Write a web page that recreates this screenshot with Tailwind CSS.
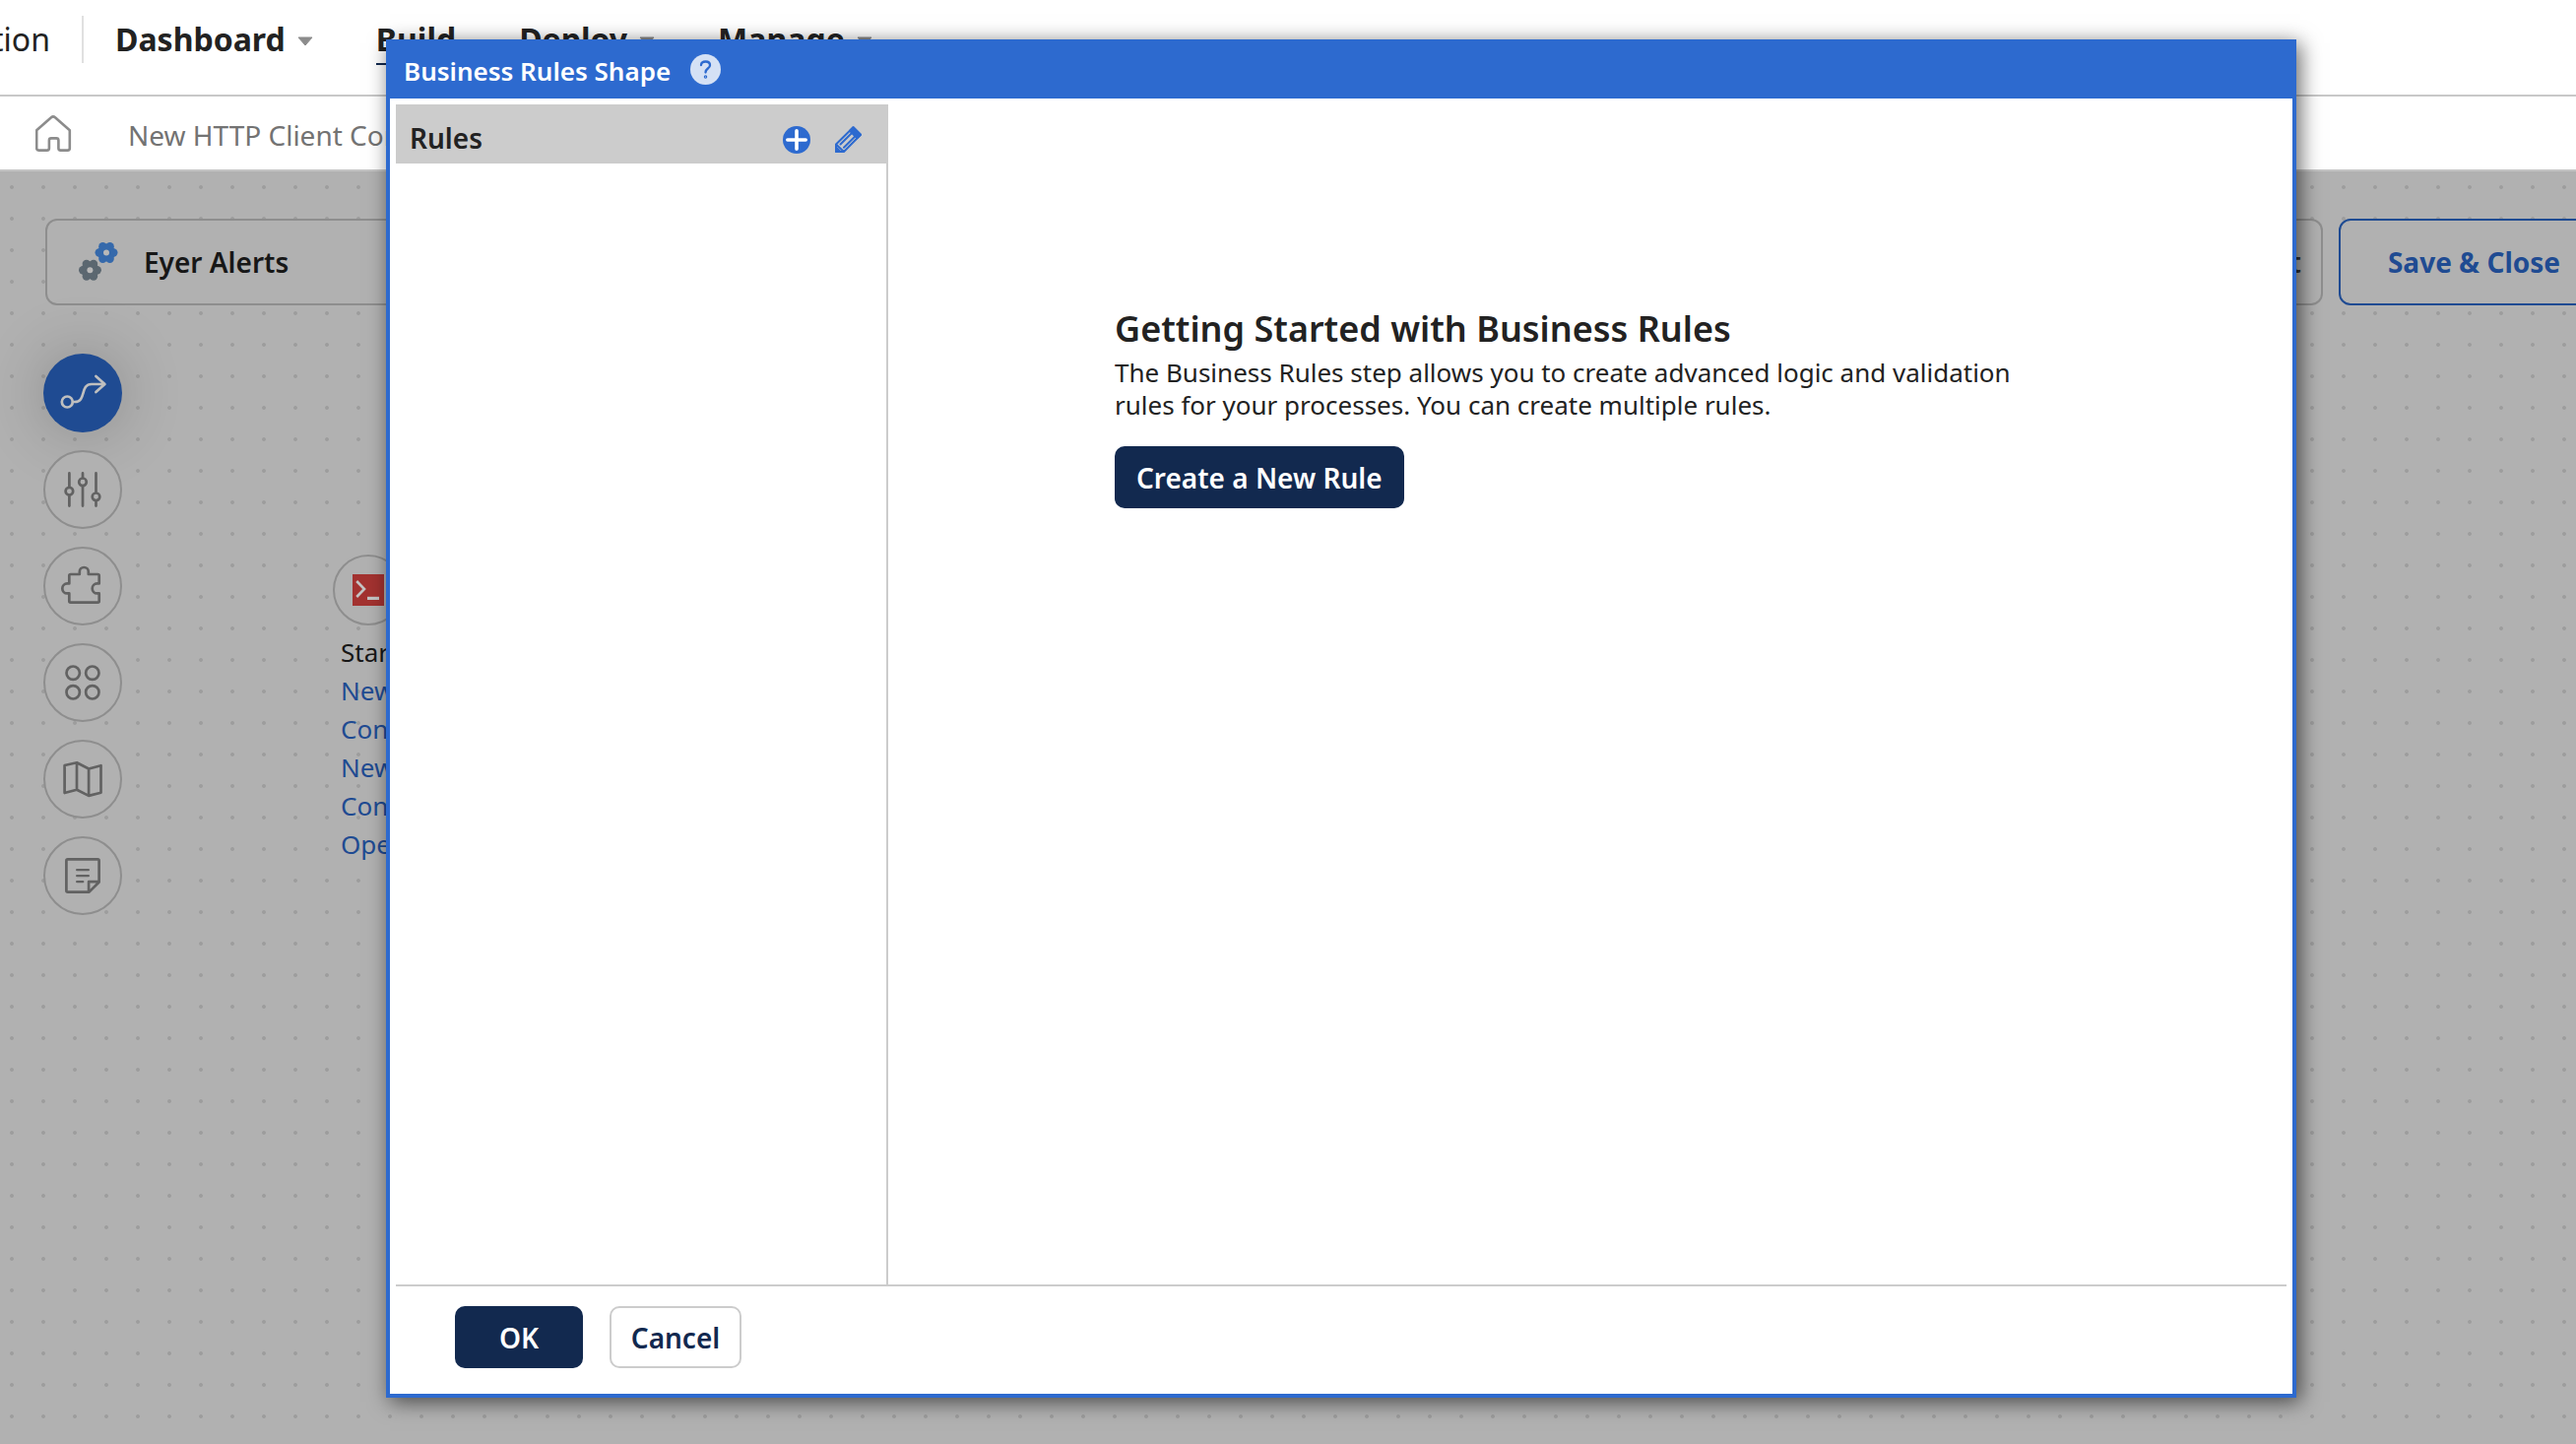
<!DOCTYPE html>
<html lang="en">
<head>
<meta charset="utf-8">
<meta name="viewport" content="width=device-width, initial-scale=1">
<title>Business Rules Shape</title>
<script src="https://cdn.jsdelivr.net/npm/@tailwindcss/browser@4"></script>
</head>
<body class="relative flex h-screen flex-col overflow-hidden bg-white font-['Noto_Sans','Open_Sans',sans-serif] text-[28px] text-[#222]">

  <!-- Top navigation -->
  <header class="flex h-[98px] shrink-0 items-center gap-8 border-b-2 border-[#c8c8c8] pb-4 text-[32px] leading-[44px]">
    <div class="flex w-[51px] shrink-0 justify-end overflow-hidden"><span>Integration</span></div>
    <div class="h-12 w-0.5 shrink-0 bg-[#e0e0e0]"></div>
    <nav class="flex items-center gap-16 font-bold">
      <a href="#" class="flex items-center gap-3">Dashboard
        <svg class="mt-1 h-2.5 w-4" viewBox="0 0 16 10"><path d="M1 1H15L8 9Z" fill="#8c8c8c" stroke="#8c8c8c" stroke-linejoin="round"/></svg>
      </a>
      <a href="#" class="flex h-[52px] items-center border-y-2 border-t-transparent border-b-[#12294f]">Build</a>
      <a href="#" class="flex items-center gap-3">Deploy
        <svg class="mt-1 h-2.5 w-4" viewBox="0 0 16 10"><path d="M1 1H15L8 9Z" fill="#8c8c8c" stroke="#8c8c8c" stroke-linejoin="round"/></svg>
      </a>
      <a href="#" class="flex items-center gap-3">Manage
        <svg class="mt-1 h-2.5 w-4" viewBox="0 0 16 10"><path d="M1 1H15L8 9Z" fill="#8c8c8c" stroke="#8c8c8c" stroke-linejoin="round"/></svg>
      </a>
    </nav>
  </header>

  <!-- Open component tabs -->
  <div class="flex h-[76px] shrink-0 items-center gap-14 border-b-2 border-[#c4c4c4] pl-9">
    <a href="#" aria-label="Home">
      <svg class="h-[38px] w-[38px]" viewBox="0 0 38 38" fill="none" stroke="#8c8c8c" stroke-width="2.600" stroke-linejoin="round"><path d="M1.200 16.2 16 3.2Q18 1.4 20 3.2L34.800 16.200V34.500Q34.800 36.600 32.700 36.600H25.500Q23.400 36.600 23.400 34.500V26.500Q23.400 24.400 21.300 24.400H16Q13.900 24.400 13.900 26.500V34.500Q13.900 36.600 11.800 36.600H3.300Q1.200 36.600 1.200 34.500Z"/></svg>
    </a>
    <a href="#" class="pt-1 whitespace-nowrap text-[#737373]">New HTTP Client Connector</a>
  </div>

  <!-- Process canvas -->
  <main class="relative flex-1 overflow-hidden bg-[#b1b1b1] bg-[radial-gradient(circle,#9d9d9d_1.5px,transparent_2.300px)] bg-size-[32px_32px] bg-position-[-4px_0px] pt-12 pl-11">
    <div class="-mr-[34px] flex h-[88px] gap-4 pl-0.5">
      <div class="flex flex-1 items-center gap-[26px] rounded-xl border-2 border-[#8e8e8e] bg-[#b1b1b1] pl-8 font-semibold text-[#171717]">
        <svg class="h-10 w-10" viewBox="0 0 40 40">
          <g fill="#3569ab"><circle cx="28" cy="10.500" r="9"/><circle cx="35.300" cy="10.500" r="4.200"/><circle cx="31.600" cy="16.800" r="4.200"/><circle cx="24.400" cy="16.800" r="4.200"/><circle cx="20.700" cy="10.500" r="4.200"/><circle cx="24.400" cy="4.200" r="4.200"/><circle cx="31.600" cy="4.200" r="4.200"/></g>
          <g fill="#5b6770"><circle cx="11.400" cy="28.200" r="9"/><circle cx="18.700" cy="28.200" r="4.200"/><circle cx="15" cy="34.500" r="4.200"/><circle cx="7.800" cy="34.500" r="4.200"/><circle cx="4.200" cy="28.200" r="4.200"/><circle cx="7.800" cy="21.900" r="4.200"/><circle cx="15" cy="21.900" r="4.200"/></g>
          <g fill="#b8b8b8"><circle cx="28" cy="10.500" r="3"/><circle cx="11.400" cy="28.200" r="3"/></g>
        </svg>
        <span>Eyer Alerts</span>
      </div>
      <button class="-ml-8 rounded-xl rounded-l-none border-2 border-l-0 border-[#8e8e8e] bg-[#b1b1b1] px-5 font-semibold text-[#333]">Test</button>
      <button class="rounded-xl border-2 border-[#1f4b92] bg-[#b1b1b1] px-12 font-bold whitespace-nowrap text-[#1f4b92]">Save &amp; Close</button>
    </div>

    <div class="mt-[49px] flex w-20 flex-col gap-[18px]">
      <button aria-label="Steps" class="size-20 rounded-full bg-[#1f4b92] shadow-[0_0_64px_rgba(0,0,0,0.22)]">
        <svg class="size-20" viewBox="0 0 80 80" fill="none" stroke="#bfbfbf" stroke-width="2.700" stroke-linecap="round" stroke-linejoin="round"><circle cx="24.300" cy="49" r="5.500"/><path d="M30 49H32C44 49 37 31 49 31H62M53.400 23 62.400 31 53.400 39"/></svg>
      </button>
      <button aria-label="Properties" class="size-20 rounded-full border-2 border-[#8e8e8e] bg-[#b1b1b1]">
        <svg class="-m-0.5 size-20 max-w-none" viewBox="0 0 80 80" fill="#b1b1b1" stroke="#626262" stroke-width="2.700" stroke-linecap="round"><path d="M26.400 23.400V56.600M40 23.400V56.600M53.500 23.400V56.600"/><circle cx="26.400" cy="41.700" r="3.800"/><circle cx="40" cy="32.300" r="3.800"/><circle cx="53.500" cy="47.300" r="3.800"/></svg>
      </button>
      <button aria-label="Extensions" class="size-20 rounded-full border-2 border-[#8e8e8e] bg-[#b1b1b1]">
        <svg class="-m-0.5 size-20 max-w-none" viewBox="0 0 80 80" fill="none" stroke="#626262" stroke-width="2.700" stroke-linejoin="round"><path d="M27.700 28H36.800V25.500A4.500 4.500 0 0 1 45.800 25.500V28H55.300Q56.700 28 56.700 29.400V37.400H54.700A5 5 0 0 0 54.700 47.400H56.700V55.300Q56.700 56.700 55.300 56.700H27.700Q26.300 56.700 26.300 55.300V47.400H24.300A5 5 0 0 1 24.300 37.400H26.300V29.400Q26.300 28 27.700 28Z"/></svg>
      </button>
      <button aria-label="Components" class="size-20 rounded-full border-2 border-[#8e8e8e] bg-[#b1b1b1]">
        <svg class="-m-0.5 size-20 max-w-none" viewBox="0 0 80 80" fill="none" stroke="#626262" stroke-width="2.700"><circle cx="30.200" cy="30.200" r="6.700"/><circle cx="49.800" cy="30.200" r="6.700"/><circle cx="30.200" cy="49.800" r="6.700"/><circle cx="49.800" cy="49.800" r="6.700"/></svg>
      </button>
      <button aria-label="Map" class="size-20 rounded-full border-2 border-[#8e8e8e] bg-[#b1b1b1]">
        <svg class="-m-0.5 size-20 max-w-none" viewBox="0 0 80 80" fill="none" stroke="#626262" stroke-width="2.700" stroke-linejoin="round"><path d="M21.600 26 34 23.200 46.100 29.500 58.500 26.200V53.800L46.100 56.900 34 50.700 21.600 54ZM34 23.200V50.700M46.100 29.500V56.900"/></svg>
      </button>
      <button aria-label="Notes" class="size-20 rounded-full border-2 border-[#8e8e8e] bg-[#b1b1b1]">
        <svg class="-m-0.5 size-20 max-w-none" viewBox="0 0 80 80" fill="none" stroke="#626262" stroke-width="2.700" stroke-linejoin="round"><path d="M24.800 23.400H55.200Q56.600 23.400 56.600 24.800V46.500L46.500 56.600H24.800Q23.400 56.600 23.400 55.200V24.800Q23.400 23.400 24.800 23.400ZM46.100 56.600V46.100H56.600"/><path d="M34.200 34.100H45.800M34.200 40.100H45.800M34.200 46.100H40.200" stroke-width="2.400" stroke-linecap="round"/></svg>
      </button>
    </div>

    <!-- Start step -->
    <div class="absolute top-[389px] left-[338px] w-72">
      <div class="flex size-[72px] items-center justify-center rounded-full border-2 border-[#8e8e8e] bg-[#b1b1b1]">
        <svg class="size-8" viewBox="0 0 32 32" fill="none" stroke="#c4c4c4" stroke-width="2.600"><path d="M0 0H32V32H0Z" fill="#a33230" stroke="none"/><path d="M4.200 7 12 15 4.200 23"/><path d="M15 24.400H27" stroke-width="3.200"/></svg>
      </div>
      <div class="flex flex-col items-start pt-2 pl-2 text-[26px] leading-[39px] whitespace-nowrap text-[#1f4b92]">
        <span class="text-[#171717]">Start</span>
        <a href="#">New HTTP Client<br>Connection</a>
        <a href="#">New HTTP Client<br>Connector<br>Operation</a>
      </div>
    </div>
  </main>

  <!-- Dialog -->
  <div class="absolute inset-0 flex pt-10 pr-[284px] pb-[47px] pl-[392px]">
    <section role="dialog" aria-labelledby="dialog-title" class="flex flex-1 flex-col border-4 border-t-0 border-[#2d6acf] bg-white shadow-[4px_4px_20px_rgba(0,0,0,0.6)]">
      <div class="flex h-[60px] shrink-0 items-center gap-5 bg-[#2d6acf] pl-3.5 text-white">
        <h1 id="dialog-title" class="pt-1 text-[26px] leading-9 font-semibold">Business Rules Shape</h1>
        <button aria-label="Help" class="flex size-[31px] items-center justify-center rounded-full bg-[#d5e1f5]">
          <svg class="size-[31px]" viewBox="0 0 31 31" fill="none" stroke="#2d6acf" stroke-width="2.300" stroke-linecap="round"><path d="M11 11C11.300 6.400 20 6.200 20 11.200C20 14.800 15.500 14.300 15.500 18.500"/><circle cx="15.500" cy="23" r=".6"/></svg>
        </button>
      </div>

      <div class="flex flex-1 flex-col px-1.5 pt-1.5">
        <div class="flex flex-1 border-b-2 border-[#ccc]">
          <aside class="flex w-[500px] flex-col">
            <div class="flex h-[60px] items-center bg-[#ccc] pt-3 pr-[26px] pl-3.5">
              <h2 class="flex-1 pb-1 leading-9 font-semibold">Rules</h2>
              <div class="flex gap-[25px]">
                <button aria-label="Add rule" class="size-7">
                  <svg class="size-7" viewBox="0 0 28 28"><circle cx="14" cy="14" r="14" fill="#2d6acf"/><path d="M14 4.800V23.200M4.800 14H23.200" stroke="#fff" stroke-width="3.600" stroke-linecap="round"/></svg>
                </button>
                <button aria-label="Edit rule" class="size-7">
                  <svg class="size-7" viewBox="0 0 28 28" fill="none" stroke="#2d6acf" stroke-width="2" stroke-linejoin="round" stroke-linecap="round"><path d="M1 26V18.500L18.500 1.200 26 8.700 9 26ZM1 18.500 9 26M5.500 18.500 16.800 7.200M9 21.800 20.300 10.500"/><path d="M15 4.800 18.500 1.200 26 8.700 22.400 12.400Z" fill="#2d6acf"/><path d="M1 26V21.500L5.500 26Z" fill="#2d6acf"/></svg>
                </button>
              </div>
            </div>
            <div class="flex-1 border-r-2 border-[#ccc]"></div>
          </aside>
          <div class="flex-1 pt-[204px] pl-[230px]">
            <h2 class="text-[36px] leading-[48px] font-semibold">Getting Started with Business Rules</h2>
            <p class="mt-1 text-[26px] leading-[33px]">The Business Rules step allows you to create advanced logic and validation<br>rules for your processes. You can create multiple rules.</p>
            <button class="mt-[25px] h-[63px] rounded-[10px] bg-[#12294f] px-[22px] font-semibold text-white">Create a New Rule</button>
          </div>
        </div>
        <div class="flex gap-[27px] pt-5 pb-[26px] pl-[60px] font-semibold">
          <button class="h-[63px] w-[130px] rounded-[10px] bg-[#12294f] text-white">OK</button>
          <button class="h-[63px] w-[134px] rounded-[10px] border-2 border-[#ccc] bg-white text-[#12294f]">Cancel</button>
        </div>
      </div>
    </section>
  </div>
</body>
</html>
